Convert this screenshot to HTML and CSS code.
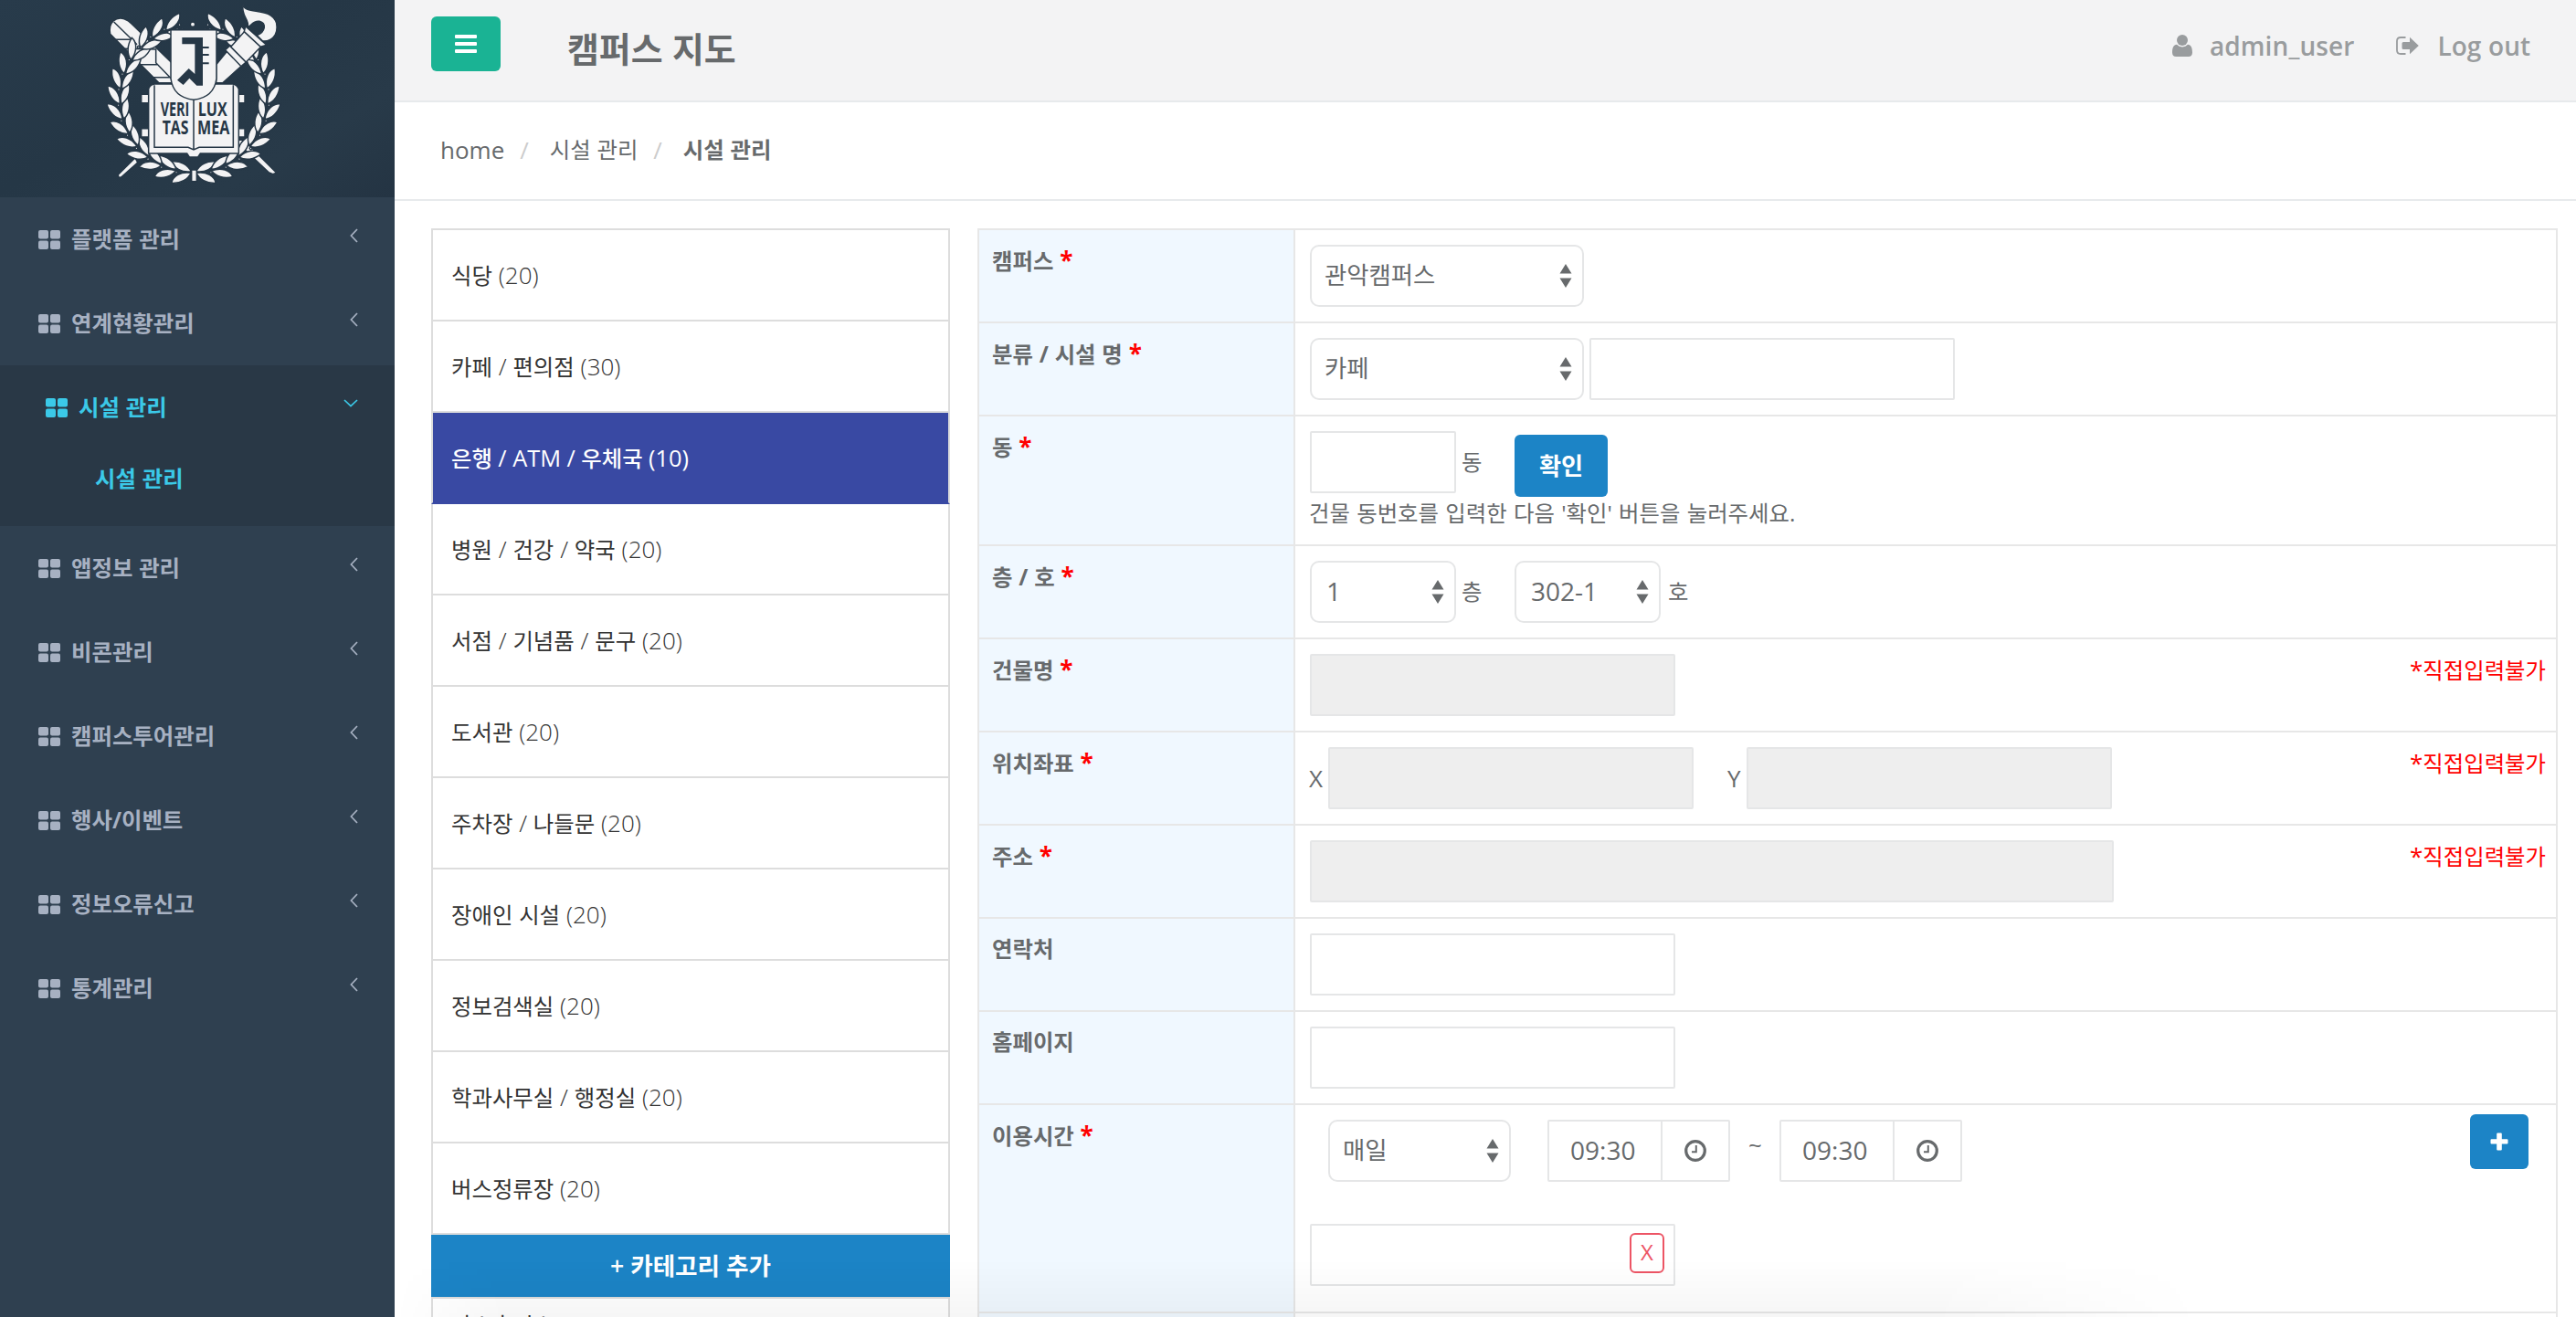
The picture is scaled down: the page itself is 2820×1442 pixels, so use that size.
FILE: index.html
```html
<!DOCTYPE html>
<html lang="ko">
<head>
<meta charset="utf-8">
<title>캠퍼스 지도</title>
<link rel="stylesheet" href="styles.css">
</head>
<body>
<svg class="defs" aria-hidden="true">
  <symbol id="i-grid" viewBox="0 0 24 21"><rect width="11" height="9.6" rx="2"/><rect x="13" width="11" height="9.6" rx="2"/><rect y="11.4" width="11" height="9.6" rx="2"/><rect x="13" y="11.4" width="11" height="9.6" rx="2"/></symbol>
  <symbol id="i-left" viewBox="0 0 9 16"><path d="M8 1 1.4 8 8 15" fill="none" stroke="currentColor" stroke-width="1.7"/></symbol>
  <symbol id="i-down" viewBox="0 0 16 9"><path d="M1 1 8 7.6 15 1" fill="none" stroke="currentColor" stroke-width="1.7"/></symbol>
  <symbol id="i-sort" viewBox="0 0 14 26"><path d="M7 0 13.5 10.5H.5ZM7 26 .5 15.5h13Z"/></symbol>
  <symbol id="i-clock" viewBox="0 0 24 24"><circle cx="12" cy="12" r="10.3" fill="none" stroke="currentColor" stroke-width="3.2"/><path d="M12.8 6v7.2H8" fill="none" stroke="currentColor" stroke-width="2"/></symbol>
  <symbol id="i-user" viewBox="0 0 22 24"><circle cx="11" cy="6" r="6"/><path d="M5 10.8C1.500 11 0 14.500 0 19.500 0 22.500 1.700 24 4.200 24h13.600c2.500 0 4.200-1.500 4.200-4.500 0-5-1.500-8.500-5-8.700a8.200 8.200 0 0 1-12 0Z"/></symbol>
  <symbol id="i-out" viewBox="0 0 25 20"><path d="M10.500 1H5Q1 1 1 5v10q0 4 4 4h5.500" fill="none" stroke="currentColor" stroke-width="1.8"/><path d="M15 .8 24.800 10 15 19.200V14H8Q6.500 14 6.500 12.500v-5Q6.500 6 8 6h7Z"/></symbol>
</svg>

<div class="layout">
  <aside class="sidebar">
    <div class="brand">
      <svg class="crest" viewBox="0 0 660 630">
        <defs>
          <g id="sprig"><path d="M4 243C-4 264-28 280-58 280-56 258-30 239 4 243Z"/><path d="M4 238C-8 216-34 204-62 209-52 231-26 244 4 238Z"/><circle cx="-44" cy="244" r="4"/></g>
          <g id="wreath"><use href="#sprig" transform="rotate(3)"/><use href="#sprig" transform="rotate(15)"/><use href="#sprig" transform="rotate(27)"/><use href="#sprig" transform="rotate(39)"/><use href="#sprig" transform="rotate(51)"/><use href="#sprig" transform="rotate(63)"/><use href="#sprig" transform="rotate(75)"/><use href="#sprig" transform="rotate(87)"/><use href="#sprig" transform="rotate(99)"/><use href="#sprig" transform="rotate(111)"/><use href="#sprig" transform="rotate(123)"/></g>
          <g id="wreath-top"><use href="#sprig" transform="rotate(135)"/><use href="#sprig" transform="rotate(147)"/><use href="#sprig" transform="rotate(159)"/></g>
        </defs>
        <g class="ink">
          <path d="M62 112C54 72 82 54 108 62Q122 66 132 78L270 212V272H222Z"/>
          <path d="M74 72 150 146M66 130H128M110 160 212 162M160 212H216M204 254H260M212 160V206L262 258" fill="none"/>
          <path d="M470 460H500L608 568 596 572 582 566Z"/>
          <path d="M88 574 144 518 152 534 98 582Q88 586 88 574Z"/>
          <g transform="translate(336 325)"><use href="#wreath"/><use href="#wreath" transform="scale(-1 1)"/><use href="#wreath-top"/><use href="#wreath-top" transform="scale(-1 1)"/></g>
          <rect x="329" y="558" width="17" height="38"/>
          <circle cx="333" cy="80" r="8"/>
          <path d="M410 272V212L446 168 496 214 432 272Z"/>
          <path d="M455 150 508 204 492 218 440 164Z"/>
          <path d="M506 100 558 152 508 204 458 154Z"/>
          <path d="M506 86 576 148 556 154 502 104Z"/>
          <path d="M498 16C506 50 590 20 608 76 616 122 584 138 562 134L544 116C572 106 576 76 552 70 530 66 520 92 514 86 518 62 492 52 498 16Z"/>
          <path d="M534 96q22 14 34-6" fill="none"/>
          <path d="M164 310h26v28h-26zM164 422h26v28h-26zM480 310h24v28h-24zM480 422h24v28h-24z"/>
          <path d="M188 292Q192 278 208 276H464Q478 278 484 292V504H358L350 516H322L314 504H188Z"/>
          <path d="M207 280V484H318L336 492 354 484H466V280M336 300V492" fill="none"/>
          <path d="M261 98H411V258Q403 320 336 328 269 320 261 258Z"/>
        </g>
        <path class="navy" d="M298 123H366V153H386V159H366V177H386V183H366V205H386V211H366V281H346L322 257 302 279 282 263 320 225 340 243V145H298Z"/>
        <g class="motto">
          <text x="227" y="381" textLength="95" lengthAdjust="spacingAndGlyphs">VERI</text><text x="350" y="381" textLength="96" lengthAdjust="spacingAndGlyphs">LUX</text>
          <text x="233" y="440" textLength="86" lengthAdjust="spacingAndGlyphs">TAS</text><text x="348" y="440" textLength="106" lengthAdjust="spacingAndGlyphs">MEA</text>
        </g>
      </svg>
    </div>
    <nav>
      <a class="nav-item"><svg class="grid"><use href="#i-grid"/></svg><span>플랫폼 관리</span><svg class="arrow"><use href="#i-left"/></svg></a>
      <a class="nav-item"><svg class="grid"><use href="#i-grid"/></svg><span>연계현황관리</span><svg class="arrow"><use href="#i-left"/></svg></a>
      <div class="nav-active">
        <a class="nav-item"><svg class="grid"><use href="#i-grid"/></svg><span>시설 관리</span><svg class="arrow down"><use href="#i-down"/></svg></a>
        <a class="nav-sub">시설 관리</a>
      </div>
      <a class="nav-item"><svg class="grid"><use href="#i-grid"/></svg><span>앱정보 관리</span><svg class="arrow"><use href="#i-left"/></svg></a>
      <a class="nav-item"><svg class="grid"><use href="#i-grid"/></svg><span>비콘관리</span><svg class="arrow"><use href="#i-left"/></svg></a>
      <a class="nav-item"><svg class="grid"><use href="#i-grid"/></svg><span>캠퍼스투어관리</span><svg class="arrow"><use href="#i-left"/></svg></a>
      <a class="nav-item"><svg class="grid"><use href="#i-grid"/></svg><span>행사/이벤트</span><svg class="arrow"><use href="#i-left"/></svg></a>
      <a class="nav-item"><svg class="grid"><use href="#i-grid"/></svg><span>정보오류신고</span><svg class="arrow"><use href="#i-left"/></svg></a>
      <a class="nav-item"><svg class="grid"><use href="#i-grid"/></svg><span>통계관리</span><svg class="arrow"><use href="#i-left"/></svg></a>
    </nav>
  </aside>

  <main class="main">
    <header class="topbar">
      <button class="toggle"><i></i><i></i><i></i></button>
      <h1>캠퍼스 지도</h1>
      <a class="user"><svg width="22" height="24"><use href="#i-user"/></svg>admin_user</a>
      <a class="logout"><svg width="25" height="20"><use href="#i-out"/></svg>Log out</a>
    </header>
    <div class="crumbs"><span class="en">home</span><i>/</i><span>시설 관리</span><i>/</i><b>시설 관리</b></div>

    <div class="content">
      <section class="categories">
        <div class="cat">식당 <span class="lt">(20)</span></div>
        <div class="cat">카페 <span class="lt">/</span> 편의점 <span class="lt">(30)</span></div>
        <div class="cat on">은행 <span class="lt">/ ATM /</span> 우체국 <span class="lt">(10)</span></div>
        <div class="cat">병원 <span class="lt">/</span> 건강 <span class="lt">/</span> 약국 <span class="lt">(20)</span></div>
        <div class="cat">서점 <span class="lt">/</span> 기념품 <span class="lt">/</span> 문구 <span class="lt">(20)</span></div>
        <div class="cat">도서관 <span class="lt">(20)</span></div>
        <div class="cat">주차장 <span class="lt">/</span> 나들문 <span class="lt">(20)</span></div>
        <div class="cat">장애인 시설 <span class="lt">(20)</span></div>
        <div class="cat">정보검색실 <span class="lt">(20)</span></div>
        <div class="cat">학과사무실 <span class="lt">/</span> 행정실 <span class="lt">(20)</span></div>
        <div class="cat">버스정류장 <span class="lt">(20)</span></div>
        <button class="add-cat">+ 카테고리 추가</button>
        <div class="cat last">가스충전소 <span class="lt">(1)</span></div>
      </section>

      <section class="form">
        <div class="row"><div class="label">캠퍼스 <em>*</em></div><div class="cell">
          <div class="select w300"><span>관악캠퍼스</span><svg><use href="#i-sort"/></svg></div></div></div>
        <div class="row"><div class="label">분류 / 시설 명 <em>*</em></div><div class="cell">
          <div class="select w300"><span>카페</span><svg><use href="#i-sort"/></svg></div><input class="w400 gap"></div></div>
        <div class="row dong"><div class="label">동 <em>*</em></div><div class="cell">
          <div class="line"><input class="w160"><span class="unit">동</span><button class="confirm">확인</button></div>
          <p>건물 동번호를 입력한 다음 '확인' 버튼을 눌러주세요.</p></div></div>
        <div class="row"><div class="label">층 / 호 <em>*</em></div><div class="cell">
          <div class="select w160"><span class="num">1</span><svg><use href="#i-sort"/></svg></div><span class="unit">층</span>
          <div class="select w160"><span class="num">302-1</span><svg><use href="#i-sort"/></svg></div><span class="unit ho">호</span></div></div>
        <div class="row"><div class="label">건물명 <em>*</em></div><div class="cell"><input class="w400" disabled><span class="note"><b>*</b>직접입력불가</span></div></div>
        <div class="row"><div class="label">위치좌표 <em>*</em></div><div class="cell"><span class="axis x">X</span><input class="w400" disabled><span class="axis y">Y</span><input class="w400" disabled><span class="note"><b>*</b>직접입력불가</span></div></div>
        <div class="row"><div class="label">주소 <em>*</em></div><div class="cell"><input class="w880" disabled><span class="note"><b>*</b>직접입력불가</span></div></div>
        <div class="row"><div class="label">연락처</div><div class="cell"><input class="w400"></div></div>
        <div class="row"><div class="label">홈페이지</div><div class="cell"><input class="w400"></div></div>
        <div class="row hours"><div class="label">이용시간 <em>*</em></div><div class="cell">
          <div class="line">
            <div class="select w200"><span>매일</span><svg><use href="#i-sort"/></svg></div>
            <div class="time"><span>09:30</span><div><svg><use href="#i-clock"/></svg></div></div>
            <span class="tilde">~</span>
            <div class="time"><span>09:30</span><div><svg><use href="#i-clock"/></svg></div></div>
            <button class="plus"><svg width="20" height="20" viewBox="0 0 20 20"><path d="M7.200 1.500Q7.200 .5 8.200 .5h3.600q1 0 1 1V7.200h5.700q1 0 1 1v3.200q0 1-1 1h-5.700v6.100q0 1-1 1H8.200q-1 0-1-1v-6.100H1.500q-1 0-1-1V8.200q0-1 1-1h5.700Z"/></svg></button>
          </div>
          <div class="memo"><span class="del">X</span></div></div></div>
        <div class="row next"><div class="label"></div><div class="cell"></div></div>
      </section>
    </div>
    <div class="haze"></div>
  </main>
</div>
</body>
</html>
```
FILE: styles.css
```css
* { box-sizing: border-box; }
body {
  margin: 0;
  height: 1442px;
  overflow: hidden;
  background: #fff;
  color: #676a6c;
  font-family: "Open Sans", "Noto Sans CJK KR", sans-serif;
  font-size: 24.4px;
  line-height: 36px;
  word-spacing: .5px;
}
.defs { position: absolute; width: 0; height: 0; }
svg { fill: currentColor; flex: none; display: block; }
button { border: 0; padding: 0; font: inherit; color: #fff; }
.layout { display: flex; height: 1442px; }

/* Sidebar */
.sidebar { width: 432px; flex: none; background: #2f4050; color: #a7b1c2; font-weight: 700; }
.brand {
  height: 216px;
  padding-left: 100px;
  background: linear-gradient(150deg, #283b4b 0%, #253746 45%, #283a49 75%, #243443 100%);
}
.crest { width: 220px; height: 210px; }
.ink { fill: #f3f3f4; stroke: #263746; stroke-width: 4.5; }
.ink path[fill="none"] { fill: none; }
.navy { fill: #263746; }
.motto { fill: #263746; font: 700 65px "Open Sans", sans-serif; }
.nav-item { display: flex; align-items: center; height: 92px; padding: 0 40px 0 42px; }
.grid { width: 24px; height: 21px; margin-right: 12px; }
.arrow { width: 9px; height: 16px; margin-left: auto; position: relative; top: -4px; }
.arrow.down { width: 16px; height: 9px; top: -5px; }
.nav-active { height: 176px; background: #293846; color: #3bc9e8; }
.nav-active .nav-item { padding-left: 50px; }
.nav-sub { display: block; padding: 14px 0 0 104px; }

/* Header */
.main { flex: 1; min-width: 0; position: relative; }
.topbar {
  display: flex;
  height: 112px;
  padding: 0 50px 0 40px;
  background: #f3f3f4;
  border-bottom: 2px solid #e7eaec;
}
.toggle {
  width: 76px; height: 60px; margin-top: 18px;
  display: flex; flex-direction: column; align-items: center; justify-content: center; gap: 4px;
  background: #1ab394; border-radius: 6px;
}
.toggle i { width: 24px; height: 4px; border-radius: 1px; background: #fff; }
.topbar h1 { margin: 26px auto 0 73px; font-size: 37.9px; line-height: 54px; font-weight: 700; }
.topbar a { display: flex; align-items: center; height: 100px; color: #999c9e; font-size: 28px; font-weight: 600; }
.topbar .user { letter-spacing: .1px; }
.user svg { margin-right: 19px; }
.logout { margin-left: 46px; }
.logout svg { margin-right: 20px; }
.crumbs { display: flex; align-items: center; height: 108px; padding: 0 0 2px 50px; border-bottom: 2px solid #e7eaec; }
.crumbs .en { font-size: 26px; }
.crumbs i { width: 12px; margin: 0 20.5px 0 17px; color: #ccc; font-style: normal; font-size: 26px; }

/* Category list */
.content { display: flex; gap: 30px; padding: 30px 20px 0 40px; }
.categories { width: 568px; flex: none; border-top: 2px solid #ddd; color: #333; }
.cat { height: 100px; padding: 0 20px; line-height: 98px; border: 2px solid #ddd; border-top: 0; font-weight: 400; }
.lt { font-size: 26px; font-weight: 300; }
.cat.on { background: linear-gradient(#3949a3, #3949a3) padding-box; border-bottom-color: #3949a3; color: #fff; font-weight: 500; word-spacing: 0; }
.cat.on .lt { font-weight: 400; font-size: 25.4px; }
.add-cat { display: block; width: 100%; height: 68px; background: #1c84c6; font-size: 26.6px; line-height: 66px; font-weight: 600; }
.cat.last { height: 22px; border-top: 2px solid #ddd; border-bottom: 0; line-height: 56px; overflow: hidden; }

/* Facility form */
.form { flex: 1; border: 2px solid #e7e7e7; border-width: 2px 2px 0; }
.row { display: flex; height: 102px; border-bottom: 2px solid #e7e7e7; }
.label { width: 346px; flex: none; padding: 15px 0 0 14px; background: #f0f8ff; border-right: 2px solid #e7e7e7; font-weight: 700; }
.label em { color: #f00; font-style: normal; font-size: 26px; }
.cell { flex: 1; display: flex; align-items: flex-start; padding: 16px 11px 0 16px; }
.row.dong { height: 142px; }
.row.hours { height: 228px; }
.row.next { height: 4px; border: 0; }
.next .label, .next .cell { padding: 0; }
.dong .cell, .hours .cell { flex-direction: column; }
.line { display: flex; align-items: flex-start; }
.hours .line { width: 100%; padding-left: 20px; }
input, .select, .time, .memo { height: 68px; border: 2px solid #e5e6e7; border-radius: 2px; background: #fff; padding: 0; }
input:disabled { background: #eee; }
.select { display: flex; align-items: center; justify-content: space-between; padding: 0 11px 2px 14px; border-radius: 10px; font-size: 26.400px; }
.select svg { width: 14px; height: 26px; position: relative; top: 1px; }
.num { font-size: 28px; padding-left: 2px; }
.w160 { width: 160px; }
.w200 { width: 200px; }
.w300 { width: 300px; }
.w400 { width: 400px; }
.w880 { width: 880px; }
.gap { margin-left: 6px; }
.unit { width: 64px; padding: 16px 0 0 6px; }
.unit.ho { padding-left: 8px; }
.confirm { width: 102px; height: 68px; margin-top: 4px; background: #1c84c6; border-radius: 6px; font-size: 26.200px; font-weight: 600; }
.dong p { margin: 0 0 0 -1px; word-spacing: 1px; }
.axis { padding-top: 16px; font-size: 26px; }
.axis.x { width: 21px; margin-left: -1px; }
.axis.y { width: 58px; padding-left: 37px; }
.note { margin: -1px 0 0 auto; color: #f00; }
.note b { font-weight: 400; font-size: 26px; }
.time { display: flex; align-items: center; width: 200px; margin-left: 40px; font-size: 28px; }
.time > span { flex: 1; padding: 0 0 2px 23px; }
.time > div { display: flex; align-items: center; justify-content: center; width: 74px; height: 64px; border-left: 2px solid #e5e6e7; }
.time svg { width: 24px; height: 24px; }
.tilde { width: 14px; margin: 9px 0 0 20px; font-size: 26px; }
.tilde + .time { margin-left: 20px; }
.plus { display: flex; align-items: center; justify-content: center; width: 64px; height: 60px; margin: -6px 19px 0 auto; background: #1c84c6; border-radius: 6px; }
.memo { width: 400px; margin-top: 46px; display: flex; justify-content: flex-end; padding: 8px 10px; }
.del { width: 38px; height: 44px; border: 2px solid #ed5565; border-radius: 6px; color: #ed5565; font-size: 24px; line-height: 38px; text-align: center; }

/* Soft shade along the bottom edge */
.haze {
  position: absolute;
  left: 0; bottom: 0;
  width: 1980px; height: 64px;
  background: linear-gradient(transparent, rgba(0, 0, 0, .035));
  -webkit-mask-image: linear-gradient(90deg, transparent, #000 120px, #000 1680px, transparent);
  mask-image: linear-gradient(90deg, transparent, #000 120px, #000 1680px, transparent);
}
```
